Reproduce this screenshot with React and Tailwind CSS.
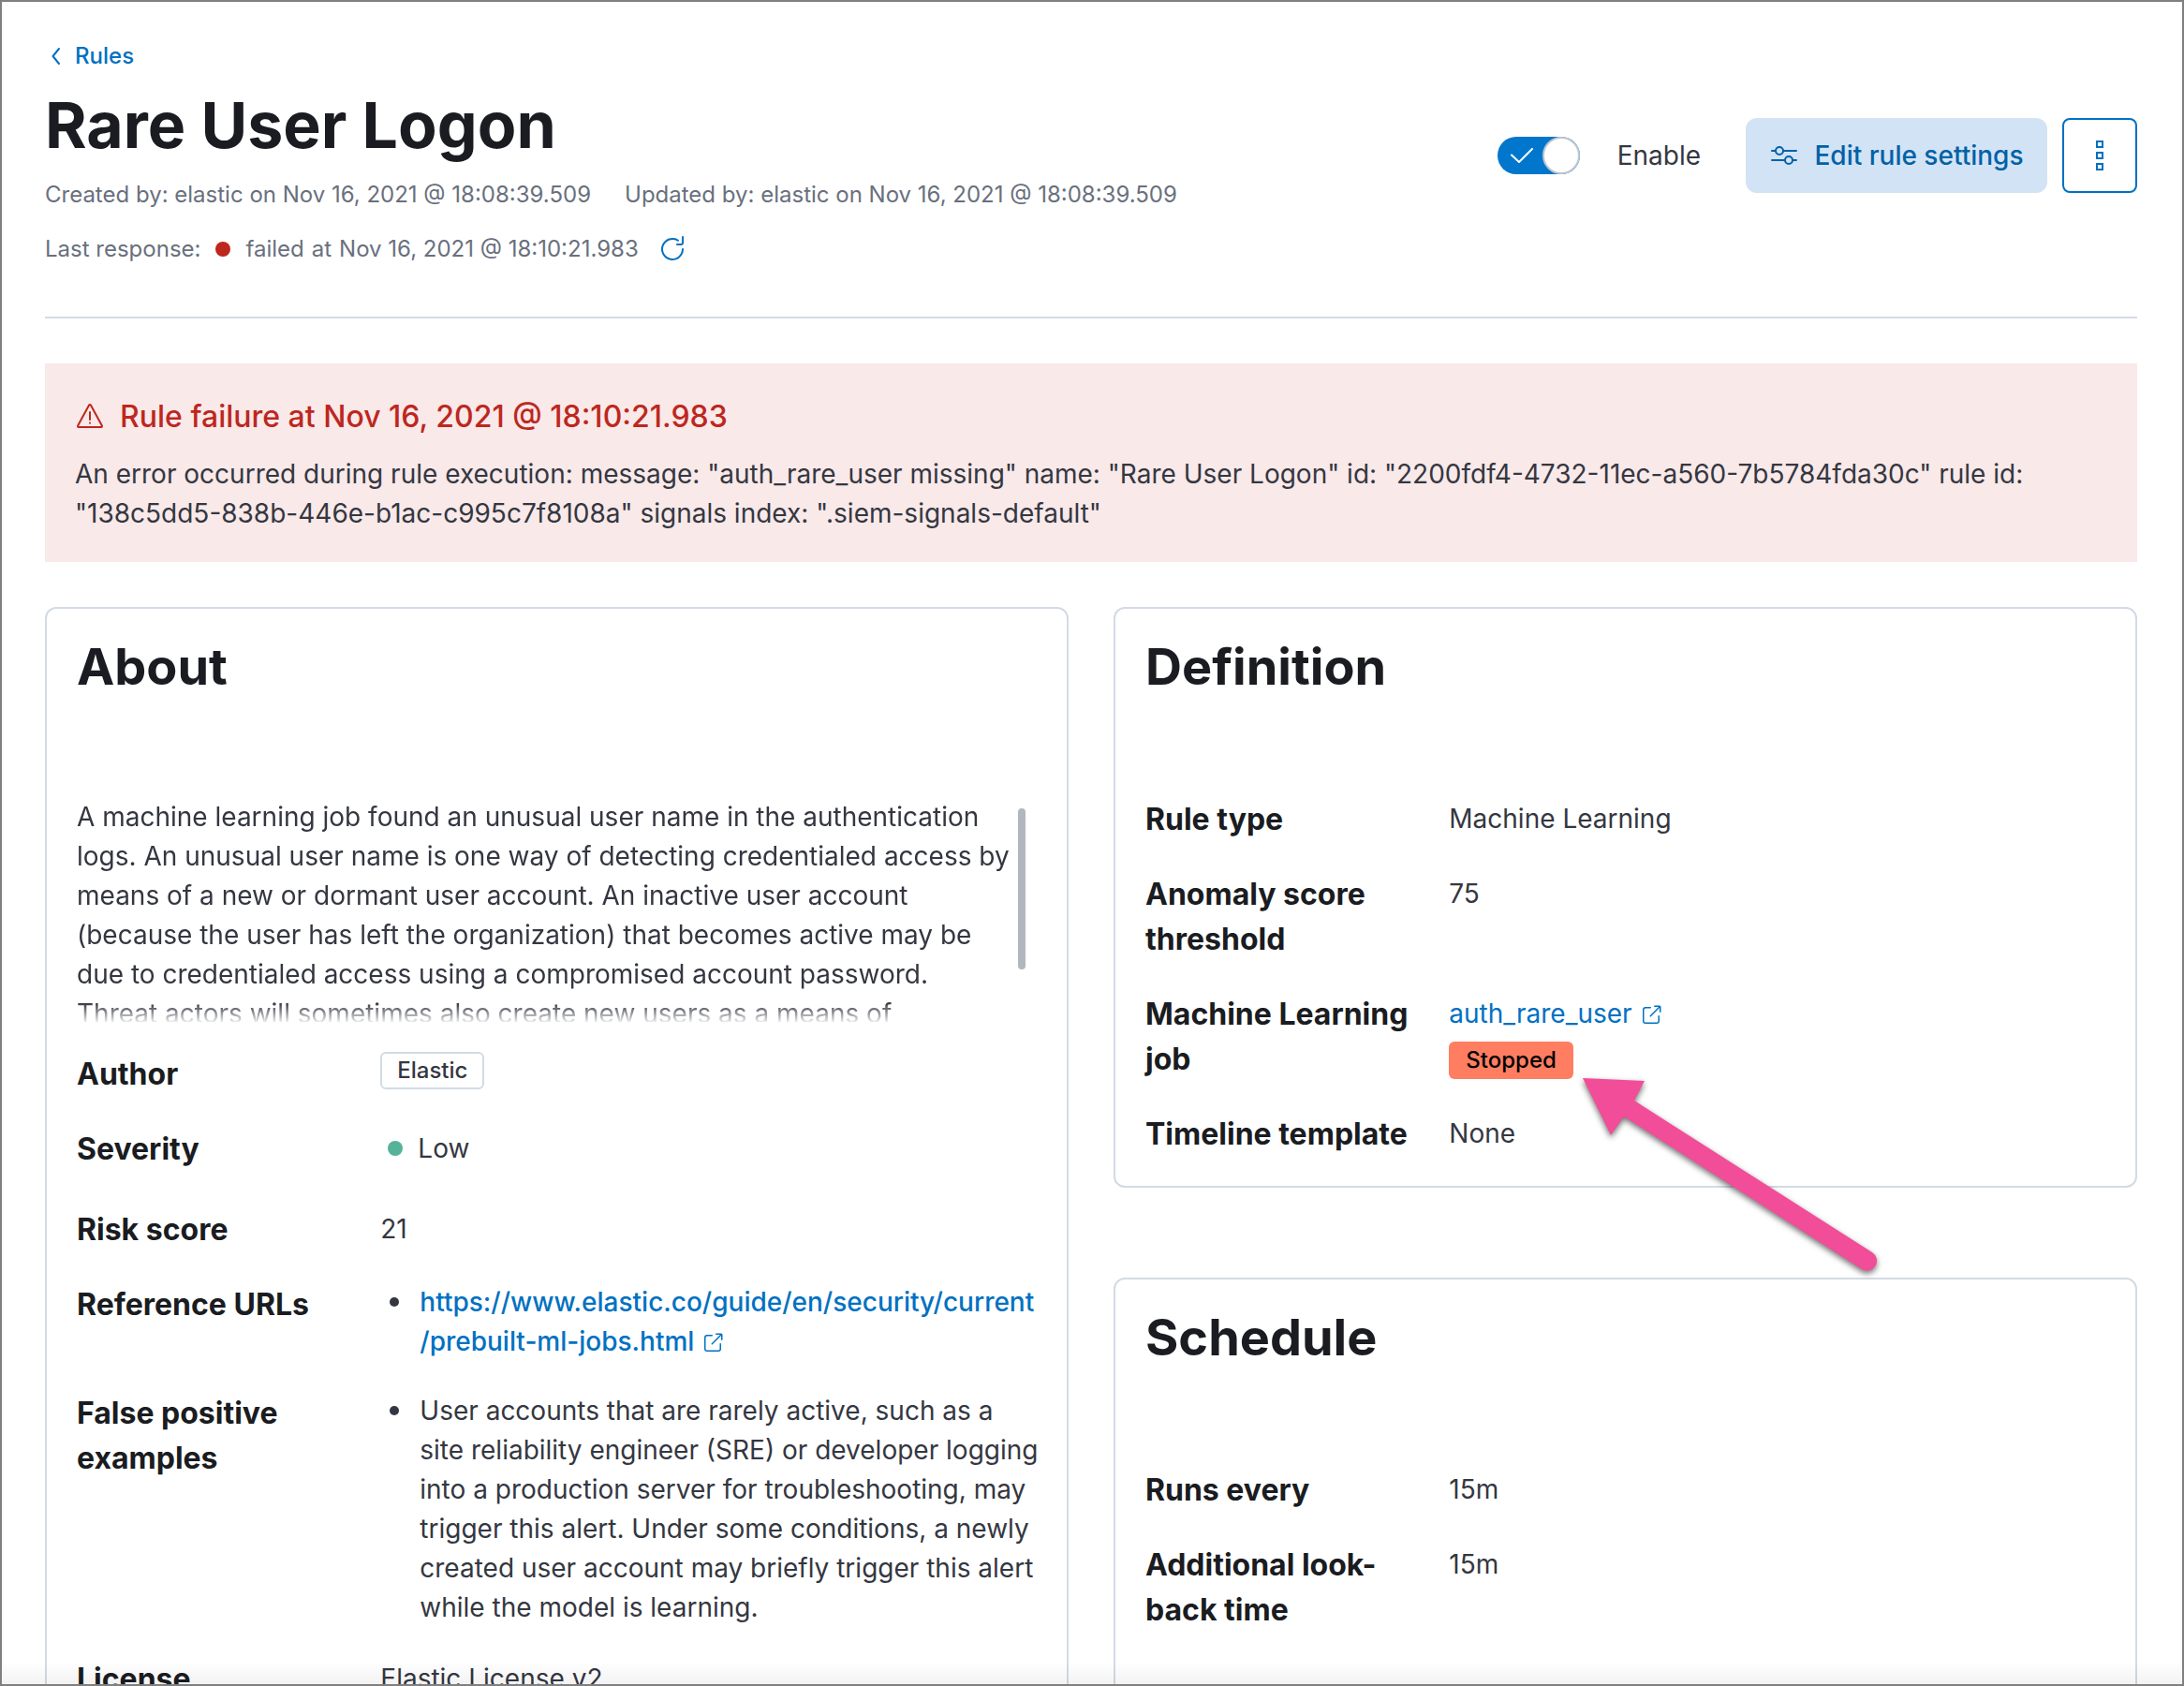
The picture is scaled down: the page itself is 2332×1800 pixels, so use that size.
import { useState } from "react";

const ERROR_MESSAGE =
  'An error occurred during rule execution: message: "auth_rare_user missing" name: "Rare User Logon" id: "2200fdf4-4732-11ec-a560-7b5784fda30c" rule id: "138c5dd5-838b-446e-b1ac-c995c7f8108a" signals index: ".siem-signals-default"';

const DESCRIPTION =
  "A machine learning job found an unusual user name in the authentication logs. An unusual user name is one way of detecting credentialed access by means of a new or dormant user account. An inactive user account (because the user has left the organization) that becomes active may be due to credentialed access using a compromised account password. Threat actors will sometimes also create new users as a means of";

export default function App() {
  return (
    <div className="relative h-screen overflow-hidden border-2 border-[#808080] bg-white pl-[46px] pr-12 pt-10 font-['Inter',sans-serif] text-[28px] leading-[42px] text-[#343741]">
      <RuleHeader />

      <hr className="mt-[54px] border-t-2 border-[#d3dae6]" />

      <FailureCallout />

      <div className="mt-12 grid grid-cols-2 gap-12">
        <AboutPanel />
        <div className="flex flex-col gap-24">
          <DefinitionPanel />
          <SchedulePanel />
        </div>
      </div>

      <div className="pointer-events-none absolute inset-x-0 bottom-0 h-6 bg-linear-to-t from-black/5 to-transparent" />
    </div>
  );
}

function RuleHeader() {
  const [enabled, setEnabled] = useState(true);

  return (
    <header>
      <a
        href="#rules"
        className="flex w-fit items-center text-2xl leading-9 font-medium text-[#0071c2]"
      >
        <svg viewBox="0 0 24 24" className="mr-2 h-6 w-6" fill="none" stroke="currentColor" strokeWidth="2" strokeLinecap="round" strokeLinejoin="round">
          <path d="M15 4 8.5 12 15 20" />
        </svg>
        Rules
      </a>

      <div className="mt-[15px] flex items-start justify-between">
        <div>
          <h1 className="text-[68px] leading-[80px] font-bold text-[#1a1c21]">
            Rare User Logon
          </h1>
          <div className="mt-[17px] flex gap-9 text-2xl leading-9 text-[#69707d]">
            <span>Created by: elastic on Nov 16, 2021 @ 18:08:39.509</span>
            <span>Updated by: elastic on Nov 16, 2021 @ 18:08:39.509</span>
          </div>
          <div className="mt-[22px] flex items-center text-2xl leading-9 text-[#69707d]">
            <span>Last response:</span>
            <span className="mx-4 h-4 w-4 rounded-full bg-[#bd271e]" />
            <div className="flex gap-2">
              <span>failed</span>
              <span>at</span>
              <span>Nov 16, 2021 @ 18:10:21.983</span>
            </div>
            <button type="button" aria-label="Refresh" className="ml-5 text-[#0071c2]">
              <RefreshIcon />
            </button>
          </div>
        </div>

        <div className="mt-[33px] flex items-center">
          <label className="flex cursor-pointer items-center gap-10">
            <input
              type="checkbox"
              role="switch"
              className="peer sr-only"
              checked={enabled}
              onChange={(e) => setEnabled(e.target.checked)}
            />
            <span className="flex h-10 w-[88px] items-center justify-end rounded-full bg-[#98a2b3] peer-checked:bg-[#0077cc]">
              <svg viewBox="0 0 24 16" className="mr-2.5 h-4 w-6" fill="none" stroke="white" strokeWidth="2" strokeLinecap="round" strokeLinejoin="round">
                <path d="M1 7.5 9 15 23 1" />
              </svg>
              <span className="h-10 w-10 rounded-full border-2 border-[#bfc6d1] bg-white" />
            </span>
            <span>Enable</span>
          </label>
          <button
            type="button"
            className="ml-12 flex h-20 min-w-[322px] items-center justify-center gap-4 rounded-xl bg-[#d2e3f5] px-6 font-medium text-[#0061a6]"
          >
            <ControlsIcon />
            Edit rule settings
          </button>
          <button
            type="button"
            aria-label="All actions"
            className="ml-4 flex h-20 w-20 flex-col items-center justify-center gap-1 rounded-lg border-2 border-[#0071c2]"
          >
            <span className="h-2 w-2 border-2 border-[#0071c2]" />
            <span className="h-2 w-2 border-2 border-[#0071c2]" />
            <span className="h-2 w-2 border-2 border-[#0071c2]" />
          </button>
        </div>
      </div>
    </header>
  );
}

function FailureCallout() {
  return (
    <section className="mt-12 bg-[#f9e9e9] px-8 pt-[33px] pb-[31px]">
      <h2 className="flex items-center gap-4 text-[32px] leading-[48px] font-medium text-[#bd271e]">
        <AlertIcon />
        Rule failure at Nov 16, 2021 @ 18:10:21.983
      </h2>
      <p className="mt-4">{ERROR_MESSAGE}</p>
    </section>
  );
}

function Panel({ title, className = "", children }) {
  return (
    <section className={`rounded-xl border-2 border-[#d3dae6] px-8 pt-8 pb-[31px] ${className}`}>
      <h2 className="text-[54px] leading-[60px] font-bold text-[#1a1c21]">{title}</h2>
      <div className="mt-[109px]">{children}</div>
    </section>
  );
}

function Row({ label, ddClassName = "pt-0.5", children }) {
  return (
    <div className="grid grid-cols-[3fr_7fr] gap-x-6">
      <dt className="text-[32px] leading-[48px] font-bold text-[#1a1c21]">{label}</dt>
      <dd className={ddClassName}>{children}</dd>
    </div>
  );
}

function BulletItem({ children }) {
  return (
    <li className="flex gap-[22px]">
      <span className="mt-4 h-2.5 w-2.5 shrink-0 rounded-full bg-[#343741]" />
      <div>{children}</div>
    </li>
  );
}

function AboutPanel() {
  return (
    <Panel title="About">
      <div className="flex">
        <p className="h-60 flex-1 overflow-hidden mask-[linear-gradient(to_bottom,black_calc(100%-20px),rgba(0,0,0,0.1))]">
          {DESCRIPTION}
        </p>
        <span className="mt-3 mr-3 ml-1 h-[172px] w-2 rounded-full bg-[#b2b7bf]" />
      </div>
      <dl className="mt-8 flex flex-col gap-8">
        <Row label="Author" ddClassName="flex items-start">
          <span className="rounded-md border-2 border-[#d3dae6] px-4 text-2xl leading-9 font-medium">
            Elastic
          </span>
        </Row>
        <Row label="Severity" ddClassName="flex items-center gap-4 pt-0.5 pb-2.5 pl-2">
          <span className="h-4 w-4 rounded-full bg-[#54b399]" />
          Low
        </Row>
        <Row label="Risk score">21</Row>
        <Row label="Reference URLs" ddClassName="-mr-1 pl-2.5">
          <ul>
            <BulletItem>
              <a href="#prebuilt-ml-jobs" className="font-medium text-[#0071c2]">
                https://www.elastic.co/guide/en/security/current
                <wbr />
                /prebuilt-ml-jobs.html <PopoutIcon />
              </a>
            </BulletItem>
          </ul>
        </Row>
        <Row label="False positive examples" ddClassName="-mr-1 pl-2.5">
          <ul>
            <BulletItem>
              User accounts that are rarely active, such as a site reliability
              engineer (SRE) or developer logging into a production server for
              troubleshooting, may trigger this alert. Under some conditions, a
              newly created user account may briefly trigger this alert while
              the model is learning.
            </BulletItem>
          </ul>
        </Row>
        <Row label="License">Elastic License v2</Row>
      </dl>
    </Panel>
  );
}

function DefinitionPanel() {
  return (
    <Panel title="Definition">
      <dl className="flex flex-col gap-8">
        <Row label="Rule type">Machine Learning</Row>
        <Row label="Anomaly score threshold">75</Row>
        <Row label="Machine Learning job">
          <a href="#auth_rare_user" className="block text-[#0071c2]">
            auth_rare_user <PopoutIcon />
          </a>
          <div className="relative mt-[9px] w-fit rounded-md bg-[#ff7e62] px-[18px] text-2xl leading-10 font-medium text-black">
            Stopped
            <PointerArrow />
          </div>
        </Row>
        <Row label="Timeline template">None</Row>
      </dl>
    </Panel>
  );
}

function SchedulePanel() {
  return (
    <Panel title="Schedule" className="flex-1">
      <dl className="flex flex-col gap-8">
        <Row label="Runs every">15m</Row>
        <Row label="Additional look-back time">15m</Row>
      </dl>
    </Panel>
  );
}

// Callout arrow pointing at the job status badge
function PointerArrow() {
  return (
    <svg
      aria-hidden="true"
      viewBox="0 0 330 210"
      className="absolute top-full left-full z-10 h-[210px] w-[330px] max-w-none overflow-visible drop-shadow-[0_3px_3px_rgba(0,0,0,0.55)]"
    >
      <path
        d="M10 -1 76 2 65 23 319 185A10.5 10.5 0 0 1 308 203L54 40 40 60Z"
        fill="#f24d98"
      />
    </svg>
  );
}

function RefreshIcon() {
  return (
    <svg viewBox="0 0 16 16" className="block h-8 w-8" fill="currentColor">
      <path d="M11.228 2.942a.5.5 0 1 1-.538.842A5 5 0 1 0 13 8a.5.5 0 1 1 1 0 6 6 0 1 1-2.772-5.058zM14 1.5v3A1.5 1.5 0 0 1 12.5 6h-2a.5.5 0 0 1 0-1h2a.5.5 0 0 0 .5-.5v-3a.5.5 0 1 1 1 0z" />
    </svg>
  );
}

function ControlsIcon() {
  return (
    <svg viewBox="0 0 16 16" className="h-8 w-8" fill="none" stroke="currentColor" strokeLinecap="round">
      <circle cx="5.5" cy="5.5" r="2" />
      <circle cx="10.5" cy="10.5" r="2" />
      <path d="M1.5 5.5h2M7.5 5.5h7M1.5 10.5h7M12.5 10.5h2" />
    </svg>
  );
}

function AlertIcon() {
  return (
    <svg viewBox="0 0 32 32" className="h-8 w-8" fill="none" stroke="currentColor" strokeWidth="2" strokeLinejoin="round" strokeLinecap="round">
      <path d="M15.1 3.6a1 1 0 0 1 1.8 0l12 21.9a1 1 0 0 1-.9 1.5H4a1 1 0 0 1-.9-1.5z" />
      <path d="M16 11v8M16 22.5v.3" />
    </svg>
  );
}

function PopoutIcon() {
  return (
    <svg viewBox="0 0 16 16" className="inline h-6 w-6 align-[-4px]" fill="currentColor">
      <path d="M13 8.5a.5.5 0 1 1 1 0V12a2 2 0 0 1-2 2H4a2 2 0 0 1-2-2V4a2 2 0 0 1 2-2h3.5a.5.5 0 0 1 0 1H4a1 1 0 0 0-1 1v8a1 1 0 0 0 1 1h8a1 1 0 0 0 1-1V8.5zm-5.12.339a.5.5 0 1 1-.706-.707L13.305 2H10.5a.5.5 0 1 1 0-1H14a1 1 0 0 1 1 1v3.5a.5.5 0 1 1-1 0V2.72L7.88 8.838z" />
    </svg>
  );
}
